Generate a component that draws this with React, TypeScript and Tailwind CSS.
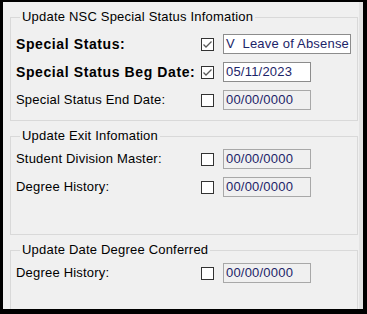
import React from "react";

const font = { fontFamily: '"Liberation Sans", Arial, sans-serif' };

interface RowProps {
    label: string;
    bold?: boolean;
    checked?: boolean;
    value: string;
    enabled?: boolean;
    wide?: boolean;
}

const CheckBox = ({ checked }: { checked?: boolean }) => (
    <div className="w-[13px] h-[13px] border border-[#333333] bg-white flex items-center justify-center shrink-0">
        {checked && (
            <svg width="11" height="11" viewBox="0 0 11 11">
                <polyline points="1.5,5.5 4,8 9.5,2.5" fill="none" stroke="#5a5a5a" strokeWidth="1.3" />
            </svg>
        )}
    </div>
);

const Row = ({ label, bold, checked, value, enabled, wide }: RowProps) => (
    <div className="flex items-center h-[28px]">
        <div
            className={
                bold
                    ? "w-[185px] text-[14px] tracking-[0.6px] font-bold text-black whitespace-nowrap"
                    : "w-[185px] text-[13px] tracking-[0.2px] text-black whitespace-nowrap"
            }
        >
            {label}
        </div>
        <CheckBox checked={checked} />
        <div
            className={
                (enabled ? "bg-white border-[#8c8c8c] " : "bg-[#f0f0f0] border-[#a8a8a8] ") +
                (wide ? "w-[128px] " : "w-[88px] ") +
                "ml-[9px] h-[20px] border flex items-center pl-[2px] text-[13px] tracking-[0.2px] text-[#1c2468] whitespace-pre overflow-hidden"
            }
        >
            {value}
        </div>
    </div>
);

const Group = ({ title, className, children }: { title: string; className: string; children?: React.ReactNode }) => (
    <fieldset className={"border border-[#d9d9d9] pl-[5px] shrink-0 " + className}>
        <legend className="ml-[4px] px-[2px] text-[13px] tracking-[0.2px] leading-[14px] text-black">{title}</legend>
        {children}
    </fieldset>
);

export default function App() {
    return (
        <div style={font} className="w-[367px] h-[314px] bg-black pl-[3px] pt-[2px] pr-[4px] pb-[5px]">
            <div className="h-full bg-[#f0f0f0] flex overflow-hidden">
                <div className="flex-1 pl-[7px] pr-[1px] pt-[8px] flex flex-col gap-[8px] overflow-hidden">
                    <Group title="Update NSC Special Status Infomation" className="h-[111px] pt-[6px]">
                        <Row label="Special Status:" bold checked enabled wide value="V  Leave of Absense" />
                        <Row label="Special Status Beg Date:" bold checked enabled value="05/11/2023" />
                        <Row label="Special Status End Date:" value="00/00/0000" />
                    </Group>
                    <Group title="Update Exit Infomation" className="h-[106px] pt-[2px]">
                        <Row label="Student Division Master:" value="00/00/0000" />
                        <Row label="Degree History:" value="00/00/0000" />
                    </Group>
                    <Group title="Update Date Degree Conferred" className="h-[80px] pt-[2px]">
                        <Row label="Degree History:" value="00/00/0000" />
                    </Group>
                </div>
                <div className="w-[4px] bg-[#e4e4e4]" />
            </div>
        </div>
    );
}
